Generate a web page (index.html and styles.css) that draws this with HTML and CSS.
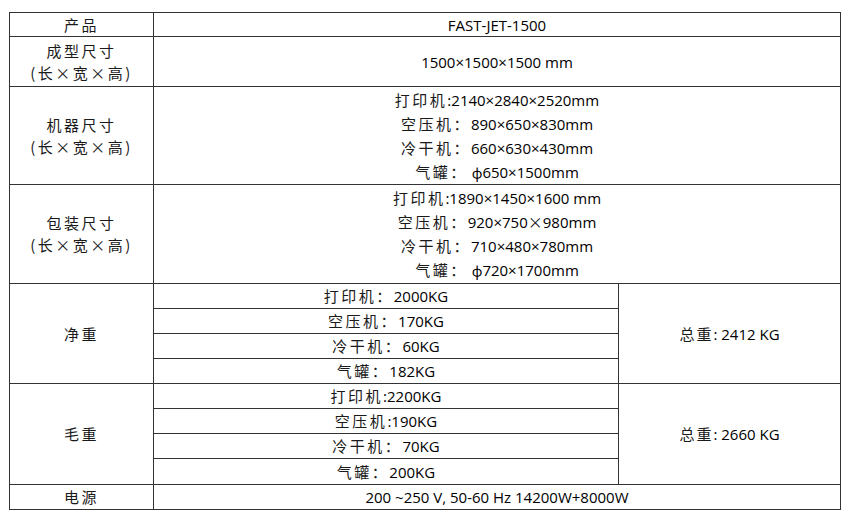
FILE: index.html
```html
<!DOCTYPE html>
<html lang="zh-CN">
<head>
<meta charset="utf-8">
<title>FAST-JET-1500</title>
<link rel="stylesheet" href="styles.css">
</head>
<body>
<div class="sheet">
  <div class="cell label r1"><span class="zh">产品</span></div>
  <div class="cell wide">FAST-JET-1500</div>

  <div class="cell label stack"><span class="zh">成型尺寸</span><span class="zh">(长×宽×高)</span></div>
  <div class="cell wide">1500×1500×1500 mm</div>

  <div class="cell label stack"><span class="zh">机器尺寸</span><span class="zh">(长×宽×高)</span></div>
  <div class="cell wide lines">
    <div><span class="zh">打印机</span>:2140×2840×2520mm</div>
    <div><span class="zh">空压机：</span>890×650×830mm</div>
    <div><span class="zh">冷干机：</span>660×630×430mm</div>
    <div><span class="zh">气罐：</span> ф650×1500mm</div>
  </div>

  <div class="cell label stack"><span class="zh">包装尺寸</span><span class="zh">(长×宽×高)</span></div>
  <div class="cell wide lines">
    <div><span class="zh">打印机</span>:1890×1450×1600 mm</div>
    <div><span class="zh">空压机：</span>920×750<span class="zh x">×</span>980mm</div>
    <div><span class="zh">冷干机：</span>710×480×780mm</div>
    <div><span class="zh">气罐：</span> ф720×1700mm</div>
  </div>

  <div class="cell label group"><span class="zh">净重</span></div>
  <div class="cell sub"><span class="zh">打印机：</span>2000KG</div>
  <div class="cell total group"><span class="zh tz">总重</span>: 2412 KG</div>
  <div class="cell sub"><span class="zh">空压机：</span>170KG</div>
  <div class="cell sub"><span class="zh">冷干机：</span>60KG</div>
  <div class="cell sub"><span class="zh">气罐：</span>182KG</div>

  <div class="cell label group"><span class="zh">毛重</span></div>
  <div class="cell sub"><span class="zh">打印机</span>:2200KG</div>
  <div class="cell total group"><span class="zh tz">总重</span>: 2660 KG</div>
  <div class="cell sub"><span class="zh">空压机</span>:190KG</div>
  <div class="cell sub"><span class="zh">冷干机：</span>70KG</div>
  <div class="cell sub"><span class="zh">气罐：</span>200KG</div>

  <div class="cell label"><span class="zh">电源</span></div>
  <div class="cell wide">200 ~250 V, 50-60 Hz 14200W+8000W</div>
</div>
</body>
</html>
```

FILE: styles.css
```css
html, body {
  margin: 0;
  padding: 0;
  background: #ffffff;
}

body {
  font-family: "Open Sans", "Noto Sans CJK SC", sans-serif;
  font-size: 15px;
  font-weight: 500;
  color: #000000;
}

.sheet {
  display: grid;
  grid-template-columns: 143px 464px 221px;
  grid-template-rows: 23px 49px 97px 98px 24px 24px 24px 24px 24px 24px 24px 25px 24px;
  gap: 1px;
  padding: 1px;
  background: #333333;
  width: max-content;
  margin: 12px 0 0 9px;
}

.cell {
  background: #ffffff;
  display: flex;
  align-items: center;
  justify-content: center;
  white-space: nowrap;
  line-height: 24px;
}

.label {
  grid-column: 1;
}

.stack {
  flex-direction: column;
  line-height: 22px;
}

.wide {
  grid-column: 2 / span 2;
}

.lines {
  flex-direction: column;
  line-height: 24px;
}

.sub {
  grid-column: 2;
}

.group {
  grid-row: span 4;
}

.total {
  grid-column: 3;
}

.zh {
  font-family: "Noto Sans CJK SC", sans-serif;
  font-size: 15px;
  font-weight: 400;
  letter-spacing: 2.5px;
  color: #1a1a1a;
}

.zh.x {
  letter-spacing: 0;
}

.zh.tz {
  letter-spacing: 2px;
}
```
